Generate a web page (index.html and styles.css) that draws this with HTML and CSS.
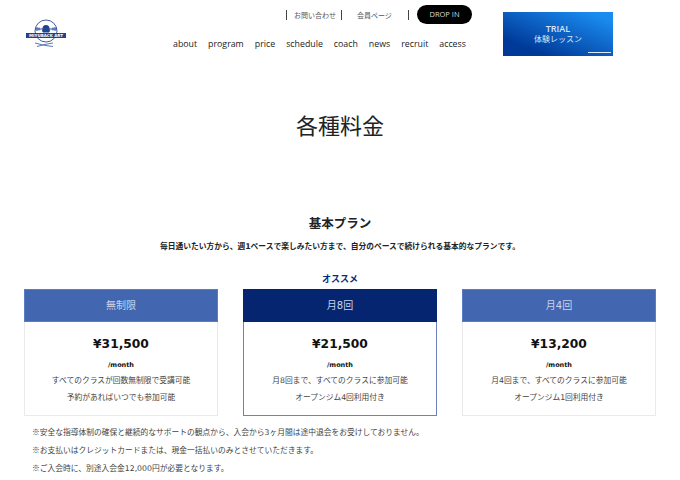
FILE: index.html
```html
<!DOCTYPE html>
<html lang="ja">
<head>
  <meta charset="UTF-8">
  <meta name="viewport" content="width=device-width, initial-scale=1.0">
  <title>各種料金</title>
  <link rel="stylesheet" href="styles.css">
</head>
<body>
<!-- ヘッダー -->
<header class="header">
  <a class="logo" href="#">
    <svg width="40" height="30" viewBox="0 0 40 30">
      <circle cx="20" cy="12" r="11" fill="none" stroke="#3a5da8" stroke-width="1"/>
      <path d="M16.500 9.500a3.500 3.500 0 1 1 7 0q1 2-.5 4h-6q-1.500-2-.5-4z" fill="#1d4391"/>
      <path d="M9 10h22M11 8v4M13 8.500v3M29 8v4M27 8.500v3" stroke="#2b4f9e" stroke-width="1" fill="none"/>
      <rect x="0" y="14" width="40" height="5" fill="#1d4391"/>
      <text x="20" y="18.200" class="logo-text">MIYUBACK ART</text>
      <path d="M9 24q10 3 18 3.500M27 24q-8 1-16 3.500" stroke="#5d78b5" stroke-width="1" fill="none"/>
    </svg>
  </a>
  <div class="header-main">
    <div class="sub-nav">
      <a class="sub-link" href="#">お問い合わせ</a>
      <a class="sub-link" href="#">会員ページ</a>
      <span class="sub-end"></span>
      <a class="drop-in" href="#">DROP IN</a>
    </div>
    <nav class="main-nav">
      <a href="#">about</a>
      <a href="#">program</a>
      <a href="#">price</a>
      <a href="#">schedule</a>
      <a href="#">coach</a>
      <a href="#">news</a>
      <a href="#">recruit</a>
      <a href="#">access</a>
    </nav>
  </div>
  <a class="trial" href="#">
    <span class="trial-en">TRIAL</span>
    <span class="trial-ja">体験レッスン</span>
    <span class="trial-arrow"></span>
  </a>
</header>

<h1 class="page-title">各種料金</h1>

<!-- 基本プラン -->
<section class="plans">
  <h2>基本プラン</h2>
  <p class="lead">毎日通いたい方から、週1ペースで楽しみたい方まで、自分のペースで続けられる基本的なプランです。</p>
  <p class="recommend">オススメ</p>

  <div class="plan-list">
    <div class="plan">
      <h3>無制限</h3>
      <div class="plan-body">
        <p class="price">¥31,500</p>
        <p class="per">/month</p>
        <p>すべてのクラスが回数無制限で受講可能</p>
        <p>予約があればいつでも参加可能</p>
      </div>
    </div>
    <div class="plan plan-best">
      <h3>月8回</h3>
      <div class="plan-body">
        <p class="price">¥21,500</p>
        <p class="per">/month</p>
        <p>月8回まで、すべてのクラスに参加可能</p>
        <p>オープンジム4回利用付き</p>
      </div>
    </div>
    <div class="plan">
      <h3>月4回</h3>
      <div class="plan-body">
        <p class="price">¥13,200</p>
        <p class="per">/month</p>
        <p>月4回まで、すべてのクラスに参加可能</p>
        <p>オープンジム1回利用付き</p>
      </div>
    </div>
  </div>

  <ul class="notes">
    <li><span class="mark">※</span>安全な指導体制の確保と継続的なサポートの観点から、入会から3ヶ月間は途中退会をお受けしておりません。</li>
    <li><span class="mark">※</span>お支払いはクレジットカードまたは、現金一括払いのみとさせていただきます。</li>
    <li><span class="mark">※</span>ご入会時に、別途入会金12,000円が必要となります。</li>
  </ul>
</section>
</body>
</html>
```

FILE: styles.css
```css
/* 全体 */
body {
  margin: 0;
  background: #fff;
  color: #222;
  font-family: "DejaVu Sans", "Noto Sans CJK JP", sans-serif;
  overflow: hidden;
}

a {
  color: inherit;
  text-decoration: none;
}

p, h1, h2, h3, ul {
  margin: 0;
  padding: 0;
}

/* ヘッダー */
.header {
  display: flex;
  align-items: flex-start;
  height: 56px;
  padding: 5px 0 0 26px;
}

.logo {
  width: 40px;
  margin-top: 14px;
}

.logo svg {
  display: block;
}

.logo-text {
  font-size: 4px;
  font-weight: bold;
  fill: #fff;
  text-anchor: middle;
}

.header-main {
  flex: none;
  width: 293px;
  margin-left: 107px;
  margin-right: 37px;
}

/* 上段のリンク */
.sub-nav {
  display: flex;
  align-items: center;
  height: 19px;
  font-family: "Noto Sans CJK JP", sans-serif;
  font-size: 7px;
  color: #555;
}

.sub-link {
  flex: none;
  box-sizing: border-box;
  width: 55px;
  margin-left: 113px;
  padding-left: 7px;
  border-left: 1px solid #444;
  line-height: 10px;
}

.sub-link + .sub-link {
  width: 67px;
  margin-left: 0;
  padding-left: 15px;
}

.sub-end {
  flex: none;
  width: 1px;
  height: 10px;
  margin-right: 8px;
  background: #444;
}

.drop-in {
  flex: none;
  width: 55px;
  height: 19px;
  border-radius: 10px;
  background: #000;
  color: #ddd;
  font-family: "Open Sans", sans-serif;
  font-size: 7.500px;
  line-height: 19px;
  text-align: center;
}

/* メインナビ */
.main-nav {
  display: flex;
  justify-content: space-between;
  margin-top: 12px;
  font-family: "Open Sans", sans-serif;
  font-size: 8.800px;
  line-height: 16px;
  color: #222;
}

/* 体験レッスン */
.trial {
  position: relative;
  flex: none;
  display: flex;
  flex-direction: column;
  align-items: center;
  box-sizing: border-box;
  width: 110px;
  height: 44px;
  margin-top: 7px;
  padding-top: 11px;
  background: linear-gradient(to top right, #003a99 20%, #1a8cf0 90%);
  color: #d6e6f8;
}

.trial-en {
  font-family: "Open Sans", sans-serif;
  font-size: 9px;
  font-weight: 600;
  line-height: 11px;
}

.trial-ja {
  font-family: "Noto Sans CJK JP", sans-serif;
  font-size: 8px;
  line-height: 10px;
}

.trial-arrow {
  position: absolute;
  right: 2px;
  bottom: 3px;
  width: 23px;
  height: 1px;
  background: #dbe8f8;
}

/* ページタイトル */
.page-title {
  margin-top: 47px;
  font-family: "Noto Sans CJK JP", sans-serif;
  font-size: 22px;
  font-weight: 400;
  line-height: 32px;
  text-align: center;
  color: #222;
}

/* プラン */
.plans {
  margin-top: 75px;
  padding: 0 24px;
}

.plans h2 {
  font-size: 12.500px;
  font-weight: 700;
  line-height: 18px;
  text-align: center;
}

.lead {
  margin-top: 8px;
  font-size: 7.750px;
  font-weight: 700;
  line-height: 12px;
  text-align: center;
}

.recommend {
  margin-top: 20px;
  font-size: 9px;
  font-weight: 700;
  line-height: 12px;
  text-align: center;
  color: #0a2a78;
}

.plan-list {
  display: flex;
  gap: 25px;
  margin-top: 4px;
}

.plan {
  width: 194px;
}

.plan h3 {
  box-sizing: border-box;
  height: 33px;
  border: 1px solid #5a7cc0;
  background: #4266b0;
  color: #c8d4ea;
  font-size: 10px;
  font-weight: 400;
  line-height: 31px;
  text-align: center;
}

.plan-body {
  box-sizing: border-box;
  height: 94px;
  padding-top: 12px;
  border: 1px solid #eaeaea;
  border-top: none;
  font-size: 7.750px;
  line-height: 17px;
  text-align: center;
  color: #444;
}

.plan-best h3 {
  border-color: #052570;
  background: #052570;
}

.plan-best .plan-body {
  border-color: #6d82bd;
}

.price {
  font-size: 12.250px;
  font-weight: 700;
  line-height: 20px;
  color: #111;
}

.per {
  margin-top: 4px;
  font-size: 6.500px;
  font-weight: 700;
  line-height: 14px;
  color: #111;
}

/* 注意書き */
.notes {
  margin-top: 8px;
  padding-left: 8px;
  list-style: none;
  font-size: 7.750px;
  line-height: 18px;
  color: #444;
}

.mark {
  font-family: "Noto Sans CJK JP", sans-serif;
  line-height: 1;
}
```
